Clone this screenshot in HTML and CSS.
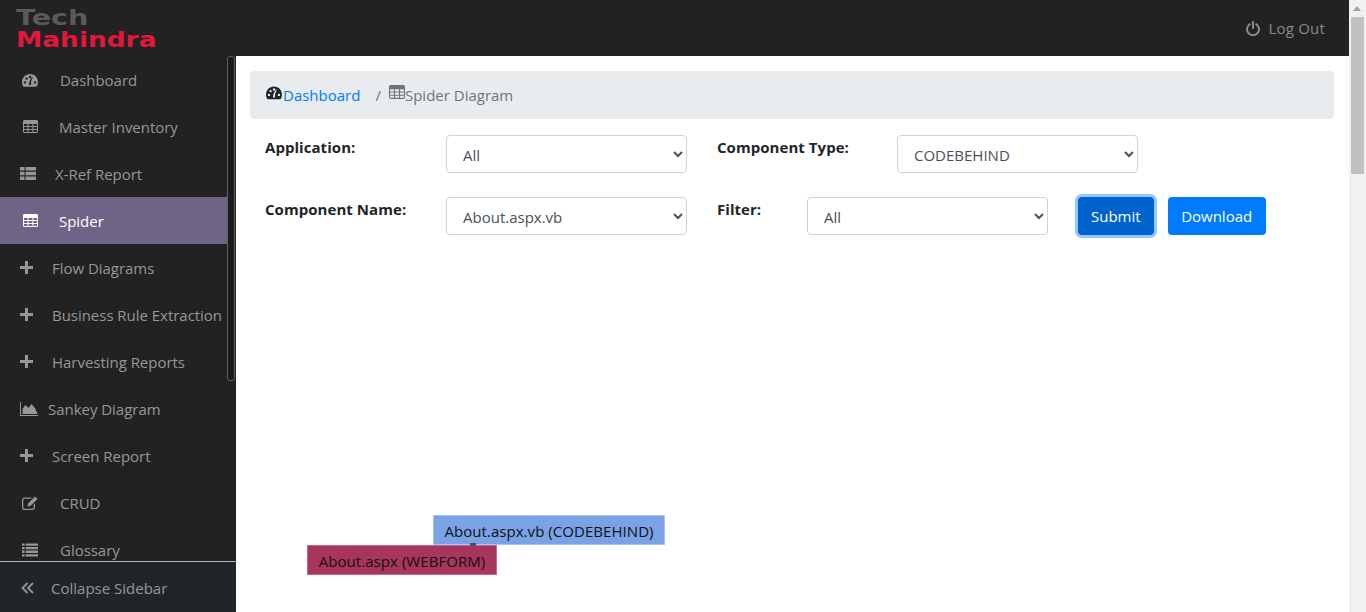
FILE: index.html
```html
<!DOCTYPE html>
<html>
    <head>
        <title>Spider Diagram</title>
        <link rel="stylesheet" href="styles.css">
    </head>
    <body>
        <svg class="icon-defs" width="0" height="0">
            <symbol id="i-gauge" viewBox="0 0 16 14">
                <path fill-rule="evenodd" d="M8 1C3.6 1 0 4.6 0 9c0 1.6.5 3.1 1.3 4.4.1.2.3.3.5.3h12.4c.2 0 .4-.1.5-.3C15.5 12.1 16 10.6 16 9c0-4.4-3.6-8-8-8zM3 10.6a1.2 1.2 0 1 1 0-2.4 1.2 1.2 0 0 1 0 2.4zm1.6-3.8a1.2 1.2 0 1 1 0-2.4 1.2 1.2 0 0 1 0 2.4zM8 5.200a1.200 1.200 0 1 1 0-2.400 1.200 1.200 0 0 1 0 2.400zm1 6.800H7l.4-3.500L9.900 3.900l.9.400L9 8.700c.3.300 0 3.300 0 3.300zm4-1.400a1.200 1.200 0 1 1 0-2.400 1.200 1.200 0 0 1 0 2.400z"/>
            </symbol>
            <symbol id="i-table" viewBox="0 0 15 13">
                <path fill-rule="evenodd" d="M1.500 0h12c.8 0 1.500.7 1.500 1.500v10c0 .8-.7 1.500-1.500 1.500h-12C.7 13 0 12.300 0 11.500v-10C0 .7.7 0 1.500 0zM1 4v2h3.600V4zm4.600 0v2h3.800V4zm4.800 0v2H14V4zM1 7v2h3.600V7zm4.600 0v2h3.800V7zm4.800 0v2H14V7zM1 10v1.500c0 .3.200.5.500.5h3.100v-2zm4.600 0v2h3.800v-2zm4.800 0v2h3.100c.3 0 .5-.2.500-.5V10z"/>
            </symbol>
            <symbol id="i-thlist" viewBox="0 0 16 13">
                <path d="M0 0h4.500v3.400H0zM5.500 0H16v3.400H5.500zM0 4.800h4.500v3.400H0zM5.500 4.800H16v3.400H5.500zM0 9.600h4.500V13H0zM5.500 9.600H16V13H5.500z"/>
            </symbol>
            <symbol id="i-plus" viewBox="0 0 13 13">
                <path d="M5 0h3v5h5v3H8v5H5V8H0V5h5z"/>
            </symbol>
            <symbol id="i-area" viewBox="0 0 18 14">
                <path d="M0 0h1v13h17v1H0zM2.500 12V7l3-4 3 3 3-4 3.500 4 2.500 6z"/>
            </symbol>
            <symbol id="i-edit" viewBox="0 0 16 14">
                <path d="M2.500 1.500H10L8.800 2.800H2.500c-.7 0-1.200.5-1.200 1.200v7.500c0 .7.500 1.200 1.200 1.200h8c.7 0 1.200-.5 1.200-1.200V8.500L13 7.200v4.300c0 1.400-1.100 2.500-2.500 2.500h-8C1.100 14 0 12.900 0 11.500V4c0-1.400 1.100-2.500 2.500-2.500zM13 .5l2.500 2.500-6.800 6.800-3.200.7.700-3.200z"/>
            </symbol>
            <symbol id="i-list" viewBox="0 0 16 13">
                <path d="M0 0h2.600v2.300H0zM3.600 0H16v2.300H3.600zM0 3.500h2.600v2.300H0zM3.600 3.500H16v2.300H3.600zM0 7.100h2.600v2.300H0zM3.600 7.100H16v2.300H3.600zM0 10.700h2.600V13H0zM3.600 10.700H16V13H3.600z"/>
            </symbol>
            <symbol id="i-power" viewBox="0 0 14 15">
                <path fill="none" stroke="currentColor" stroke-width="2" stroke-linecap="round" d="M7 1v6M3.800 3.200a6 6 0 1 0 6.400 0"/>
            </symbol>
        </svg>

        <div class="app">
            <header class="topbar">
                <div class="logo">
                    <span class="logo-tech">Tech</span>
                    <span class="logo-brand">Mahindra</span>
                </div>
                <a class="logout" href="#">
                    <svg class="logout-icon"><use href="#i-power"/></svg>
                    Log Out
                </a>
            </header>

            <div class="layout">
                <aside class="sidebar">
                    <nav class="nav">
                        <a class="nav-item nav-wide" href="#"><svg class="nav-icon gauge-icon"><use href="#i-gauge"/></svg>Dashboard</a>
                        <a class="nav-item nav-wide" href="#"><svg class="nav-icon table-icon"><use href="#i-table"/></svg>Master Inventory</a>
                        <a class="nav-item nav-mid" href="#"><svg class="nav-icon"><use href="#i-thlist"/></svg>X-Ref Report</a>
                        <a class="nav-item nav-wide active" href="#"><svg class="nav-icon table-icon"><use href="#i-table"/></svg>Spider</a>
                        <a class="nav-item nav-plus" href="#"><svg class="nav-icon plus-icon"><use href="#i-plus"/></svg>Flow Diagrams</a>
                        <a class="nav-item nav-plus" href="#"><svg class="nav-icon plus-icon"><use href="#i-plus"/></svg>Business Rule Extraction</a>
                        <a class="nav-item nav-plus" href="#"><svg class="nav-icon plus-icon"><use href="#i-plus"/></svg>Harvesting Reports</a>
                        <a class="nav-item nav-chart" href="#"><svg class="nav-icon area-icon"><use href="#i-area"/></svg>Sankey Diagram</a>
                        <a class="nav-item nav-plus" href="#"><svg class="nav-icon plus-icon"><use href="#i-plus"/></svg>Screen Report</a>
                        <a class="nav-item nav-wide" href="#"><svg class="nav-icon gauge-icon"><use href="#i-edit"/></svg>CRUD</a>
                        <a class="nav-item nav-wide" href="#"><svg class="nav-icon gauge-icon"><use href="#i-list"/></svg>Glossary</a>
                    </nav>
                    <div class="side-scroll"></div>
                    <a class="collapse" href="#">
                        <svg class="collapse-icon" viewBox="0 0 13 12"><path fill="none" stroke="currentColor" stroke-width="1.800" d="M6.500 1 1.500 6l5 5M12 1 7 6l5 5"/></svg>
                        Collapse Sidebar
                    </a>
                </aside>

                <main class="content">
                    <div class="breadcrumb">
                        <svg class="crumb-icon crumb-gauge"><use href="#i-gauge"/></svg><a href="#">Dashboard</a>
                        <span class="crumb-sep">/</span>
                        <svg class="crumb-icon crumb-table"><use href="#i-table"/></svg><span>Spider Diagram</span>
                    </div>

                    <form class="filters">
                        <div class="filter-row">
                            <label class="filter-label label-first">Application:</label>
                            <select class="filter-select"><option>All</option></select>
                            <label class="filter-label label-type">Component Type:</label>
                            <select class="filter-select"><option>CODEBEHIND</option></select>
                        </div>
                        <div class="filter-row">
                            <label class="filter-label label-first">Component Name:</label>
                            <select class="filter-select"><option>About.aspx.vb</option></select>
                            <label class="filter-label label-filter">Filter:</label>
                            <select class="filter-select"><option>All</option></select>
                            <button class="btn btn-focus" type="button">Submit</button>
                            <button class="btn btn-download" type="button">Download</button>
                        </div>
                    </form>

                    <div class="diagram">
                        <div class="node-link"></div>
                        <div class="node node-blue">About.aspx.vb (CODEBEHIND)</div>
                        <div class="node node-red">About.aspx (WEBFORM)</div>
                    </div>
                </main>

                <div class="page-scroll">
                    <span class="scroll-up"></span>
                    <div class="scroll-thumb"></div>
                </div>
            </div>
        </div>
    </body>
</html>
```

FILE: styles.css
```css
:root {
    --bar-clr: #222222;
    --nav-clr: #979797;
    --link-clr: #007bff;
}

html, body {
    margin: 0;
    height: 100%;
    overflow: hidden;
}

body {
    font-family: 'Open Sans', 'Noto Sans', sans-serif;
    font-size: 15px;
    color: #212529;
    background-color: #fff;
}

a {
    text-decoration: none;
}

.icon-defs {
    position: absolute;
}

.app {
    height: 612px;
    display: flex;
    flex-direction: column;
}

/* top bar */
.topbar {
    height: 56px;
    flex: none;
    background-color: var(--bar-clr);
    display: flex;
    justify-content: space-between;
    align-items: center;
    padding-right: 24px;
    margin-right: 17px;
}

.logo {
    padding: 7px 0 0 16px;
    align-self: flex-start;
    display: flex;
    flex-direction: column;
    align-items: flex-start;
    font-family: 'DejaVu Sans', sans-serif;
    font-weight: bold;
    font-size: 22px;
    line-height: 22px;
}
.logo-tech {
    color: #5a5a5a;
    transform: scaleX(1.3);
    transform-origin: left center;
}
.logo-brand {
    color: #e3173e;
    transform: scaleX(1.2);
    transform-origin: left center;
}

.logout {
    color: #8a8a8a;
    display: flex;
    align-items: center;
    gap: 8px;
    letter-spacing: 0.2px;
}
.logout-icon {
    width: 14px;
    height: 15px;
}

.layout {
    flex: 1;
    min-height: 0;
    display: flex;
}

/* sidebar */
.sidebar {
    width: 236px;
    flex: none;
    background-color: var(--bar-clr);
    display: flex;
    flex-direction: column;
    position: relative;
}

.nav {
    flex: 1;
    min-height: 0;
    overflow: hidden;
}

.nav-item {
    height: 47px;
    width: 227px;
    box-sizing: border-box;
    display: flex;
    align-items: center;
    color: var(--nav-clr);
    white-space: nowrap;
    letter-spacing: -0.03px;
}
.nav-item.active {
    background-color: #6f6488;
    color: #fff;
}

.nav-icon {
    width: 16px;
    height: 13px;
    fill: currentColor;
    flex: none;
}
.nav-wide { padding-left: 22px; }
.nav-wide .nav-icon { margin-right: 22px; }
.nav-mid { padding-left: 20px; }
.nav-mid .nav-icon { margin-right: 19px; }
.nav-plus { padding-left: 20px; }
.nav-plus .nav-icon { margin-right: 19px; }
.nav-chart { padding-left: 20px; }
.nav-chart .nav-icon { margin-right: 10px; }

.gauge-icon {
    height: 14px;
}
.table-icon {
    width: 15px;
    margin-left: 1px;
}
.nav-wide .table-icon {
    margin-right: 21px;
}
.plus-icon {
    width: 13px;
}
.area-icon {
    width: 18px;
    height: 14px;
}

.side-scroll {
    position: absolute;
    left: 227px;
    top: 0;
    width: 6px;
    height: 323px;
    background-color: #1c1c1c;
    border: 1px solid #5f5f5f;
    border-radius: 3px;
}

.collapse {
    height: 49px;
    flex: none;
    box-sizing: content-box;
    border-top: 1px solid #b5b5b5;
    background-color: #212529;
    color: var(--nav-clr);
    display: flex;
    align-items: center;
    padding: 1px 0 0 21px;
    gap: 17px;
}
.collapse-icon {
    width: 13px;
    height: 12px;
}

/* main */
.content {
    flex: 1;
    min-width: 0;
    padding: 15px 15px 0 14px;
    display: flex;
    flex-direction: column;
    box-sizing: border-box;
}

.breadcrumb {
    height: 48px;
    flex: none;
    box-sizing: border-box;
    background-color: #e9ecef;
    border-radius: 4px;
    padding: 0 16px;
    display: flex;
    align-items: center;
    color: #6c757d;
}
.breadcrumb a {
    color: var(--link-clr);
}
.crumb-sep {
    margin: 0 8px 0 15px;
}
.crumb-icon {
    fill: currentColor;
    margin-top: -6px;
    flex: none;
}
.crumb-gauge {
    width: 16px;
    height: 15px;
    margin-right: 1px;
    color: #212529;
}
.crumb-table {
    width: 16px;
    height: 14px;
}

.filters {
    display: flex;
    flex-direction: column;
    gap: 24px;
    padding: 16px 0 0 15px;
}
.filter-row {
    display: flex;
    align-items: flex-start;
}
.filter-label {
    font-weight: bold;
    padding-top: 1px;
    line-height: 22px;
    letter-spacing: 0.05px;
}
.label-first { width: 181px; }
.label-type {
    width: 180px;
    margin-left: 30px;
}
.label-filter {
    width: 90px;
    margin-left: 30px;
}

.filter-select {
    width: 241px;
    height: 38px;
    padding: 1px 12px 0;
    border: 1px solid #ced4da;
    border-radius: 4px;
    background-color: #fff;
    color: #495057;
    font: inherit;
}

.btn {
    height: 38px;
    padding: 0 13px;
    margin-left: 14px;
    border: 0;
    border-radius: 4px;
    background-color: var(--link-clr);
    color: #fff;
    font: inherit;
}
.btn-download {
    padding: 0 13.5px;
}
.btn-focus {
    margin-left: 30px;
    background-color: #0062cc;
    box-shadow: 0 0 0 3px rgba(38, 143, 255, 0.5);
}

.diagram {
    flex: 1;
    position: relative;
}
.node {
    position: absolute;
    height: 30px;
    line-height: 30px;
    box-sizing: border-box;
    text-align: center;
    color: #111;
    white-space: nowrap;
    letter-spacing: 0.05px;
}
.node-blue {
    left: 183px;
    top: 280px;
    width: 232px;
    background-color: #7aa2e6;
    border: 1px solid #a9c3ef;
}
.node-red {
    left: 57px;
    top: 310px;
    width: 190px;
    background-color: #a8355c;
    border: 1px solid #c9688a;
}
.node-link {
    position: absolute;
    left: 220px;
    top: 308px;
    width: 6px;
    height: 3px;
    background-color: #4d4d5a;
    z-index: 1;
}

/* page scrollbar, drawn */
.page-scroll {
    width: 17px;
    flex: none;
    margin-top: -56px;
    background-color: #f1f1f1;
    position: relative;
}
.scroll-up {
    position: absolute;
    left: 4px;
    top: 6px;
    border: 4px solid transparent;
    border-top: 0;
    border-bottom: 5px solid #a3a3a3;
}
.scroll-thumb {
    margin: 17px 2px 0 2px;
    height: 157px;
    background-color: #c1c1c1;
}
```
